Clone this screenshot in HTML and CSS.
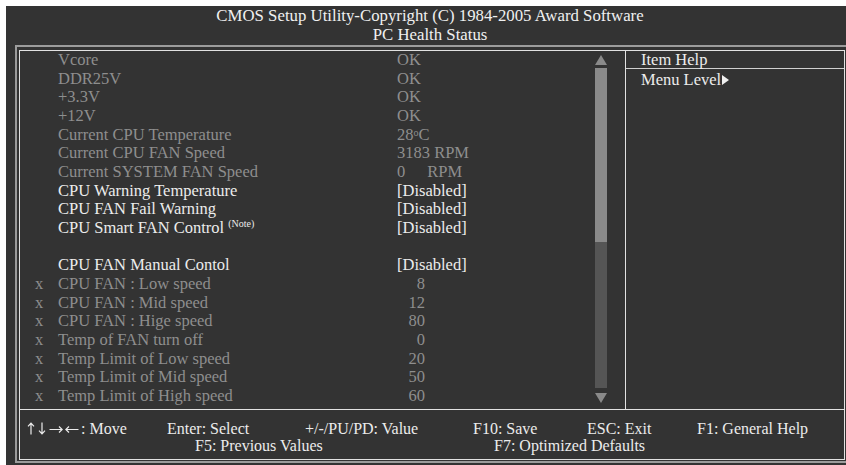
FILE: index.html
```html
<!DOCTYPE html>
<html>
<head>
<meta charset="utf-8">
<title>PC Health Status</title>
<link rel="stylesheet" href="styles.css">
</head>
<body>
<div class="screen">
  <header class="title">
    <div>CMOS Setup Utility-Copyright (C) 1984-2005 Award Software</div>
    <div>PC Health Status</div>
  </header>
  <div class="frame">
    <div class="inner">
      <div class="main">
        <div class="left">
          <div class="list">
            <div class="row dim"><span class="mk"></span><span class="lbl">Vcore</span><span class="val">OK</span></div>
            <div class="row dim"><span class="mk"></span><span class="lbl">DDR25V</span><span class="val">OK</span></div>
            <div class="row dim"><span class="mk"></span><span class="lbl">+3.3V</span><span class="val">OK</span></div>
            <div class="row dim"><span class="mk"></span><span class="lbl">+12V</span><span class="val">OK</span></div>
            <div class="row dim"><span class="mk"></span><span class="lbl">Current CPU Temperature</span><span class="val">28<span class="deg">o</span>C</span></div>
            <div class="row dim"><span class="mk"></span><span class="lbl">Current CPU FAN Speed</span><span class="val">3183 RPM</span></div>
            <div class="row dim"><span class="mk"></span><span class="lbl">Current SYSTEM FAN Speed</span><span class="val">0<span class="gap"></span>RPM</span></div>
            <div class="row"><span class="mk"></span><span class="lbl">CPU Warning Temperature</span><span class="val">[Disabled]</span></div>
            <div class="row"><span class="mk"></span><span class="lbl">CPU FAN Fail Warning</span><span class="val">[Disabled]</span></div>
            <div class="row"><span class="mk"></span><span class="lbl">CPU Smart FAN Control <sup class="note">(Note)</sup></span><span class="val">[Disabled]</span></div>
            <div class="row"><span class="mk"></span><span class="lbl"></span><span class="val"></span></div>
            <div class="row"><span class="mk"></span><span class="lbl">CPU FAN Manual Contol</span><span class="val">[Disabled]</span></div>
            <div class="row dim"><span class="mk">x</span><span class="lbl">CPU FAN : Low speed</span><span class="val"><span class="num">8</span></span></div>
            <div class="row dim"><span class="mk">x</span><span class="lbl">CPU FAN : Mid speed</span><span class="val"><span class="num">12</span></span></div>
            <div class="row dim"><span class="mk">x</span><span class="lbl">CPU FAN : Hige speed</span><span class="val"><span class="num">80</span></span></div>
            <div class="row dim"><span class="mk">x</span><span class="lbl">Temp of FAN turn off</span><span class="val"><span class="num">0</span></span></div>
            <div class="row dim"><span class="mk">x</span><span class="lbl">Temp Limit of Low speed</span><span class="val"><span class="num">20</span></span></div>
            <div class="row dim"><span class="mk">x</span><span class="lbl">Temp Limit of Mid speed</span><span class="val"><span class="num">50</span></span></div>
            <div class="row dim"><span class="mk">x</span><span class="lbl">Temp Limit of High speed</span><span class="val"><span class="num">60</span></span></div>
          </div>
          <div class="scroll">
            <div class="tri-up"></div>
            <div class="thumb"></div>
            <div class="track"></div>
            <div class="tri-down"></div>
          </div>
        </div>
        <div class="help">
          <div class="help-head">Item Help</div>
          <div class="help-body">Menu Level<span class="arrow"></span></div>
        </div>
      </div>
      <footer class="foot">
        <div class="frow r1">
          <span class="k1"><svg class="ar-v" width="8" height="13" viewBox="0 0 8 13"><path d="M4 12.5V1.2M1 4.4L4 1.2L7 4.4"/></svg><svg class="ar-v" width="8" height="13" viewBox="0 0 8 13"><path d="M4 0.5V11.8M1 8.6L4 11.8L7 8.6"/></svg><svg class="ar-h" width="14" height="13" viewBox="0 0 14 13"><path d="M0.5 7.5H13.2M10 4.5L13.2 7.5L10 10.5"/></svg><svg class="ar-h" width="14" height="13" viewBox="0 0 14 13"><path d="M13.5 7.5H0.8M4 4.5L0.8 7.5L4 10.5"/></svg>: Move</span>
          <span class="k2">Enter: Select</span>
          <span class="k3">+/-/PU/PD: Value</span>
          <span class="k4">F10: Save</span>
          <span class="k5">ESC: Exit</span>
          <span class="k6">F1: General Help</span>
        </div>
        <div class="frow r2">
          <span class="k7">F5: Previous Values</span>
          <span class="k8">F7: Optimized Defaults</span>
        </div>
      </footer>
    </div>
  </div>
</div>
</body>
</html>
```
FILE: styles.css
```css
html, body {
  margin: 0;
  padding: 0;
  background: #ffffff;
}
body {
  font-family: "Liberation Serif", "Times New Roman", serif;
  font-size: 16px;
  color: #ececec;
}
.screen {
  margin: 6px 0 0 6px;
  width: 840px;
  height: 459px;
  background: #333333;
  overflow: hidden;
}
.title {
  height: 39px;
  line-height: 19px;
  font-size: 16.8px;
  text-align: center;
  padding-left: 8px;
  color: #f0f0f0;
}
.frame {
  margin-left: 9px;
  width: 826px;
  border: 2px solid #9c9c9c;
  padding: 3px 1px 1px 2px;
}
.inner {
  border: 1px solid #e2e2e2;
  height: 408px;
  display: flex;
  flex-direction: column;
}
.main {
  height: 358px;
  display: flex;
  border-bottom: 1px solid #e2e2e2;
}
.left {
  width: 605px;
  display: flex;
  border-right: 1px solid #e2e2e2;
}
.list {
  flex: 1;
  font-size: 16.5px;
}
.row {
  display: flex;
  height: 18.67px;
  line-height: 18.67px;
  white-space: nowrap;
}
.row.dim {
  color: #8e8e8e;
}
.mk {
  width: 23px;
  padding-left: 15px;
}
.lbl {
  width: 339px;
}
.val {
  flex: 1;
}
.num {
  display: inline-block;
  width: 28px;
  text-align: right;
}
.gap {
  display: inline-block;
  width: 22px;
}
.deg {
  font-size: 10px;
  vertical-align: 4px;
  line-height: 0;
}
.note {
  font-size: 10px;
  vertical-align: 6px;
  line-height: 0;
}
.scroll {
  width: 12px;
  margin-right: 18px;
  padding-top: 4px;
  display: flex;
  flex-direction: column;
}
.tri-up {
  width: 0;
  height: 0;
  border-left: 6px solid transparent;
  border-right: 6px solid transparent;
  border-bottom: 10px solid #8a8a8a;
}
.thumb {
  margin-top: 3px;
  height: 174px;
  background: #8a8a8a;
}
.track {
  height: 146px;
  background: #555555;
}
.tri-down {
  margin-top: 5px;
  width: 0;
  height: 0;
  border-left: 6px solid transparent;
  border-right: 6px solid transparent;
  border-top: 10px solid #8a8a8a;
}
.help {
  flex: 1;
  font-size: 16.5px;
}
.help-head {
  height: 17px;
  line-height: 17px;
  padding-left: 15px;
  border-bottom: 1px solid #cfcfcf;
}
.help-body {
  padding-left: 15px;
  padding-top: 2px;
  line-height: 18px;
}
.arrow {
  display: inline-block;
  width: 0;
  height: 0;
  border-top: 5px solid transparent;
  border-bottom: 5px solid transparent;
  border-left: 7px solid #f0f0f0;
  margin-left: 1px;
}
.foot {
  padding-top: 10px;
}
.frow {
  display: flex;
  line-height: 17px;
  white-space: nowrap;
}
.k1 svg {
  vertical-align: -1px;
  fill: none;
  stroke: #ececec;
  stroke-width: 1.2;
}
.ar-v {
  margin-right: 3px;
}
.ar-h {
  margin-right: 2px;
}
.r1 {
  padding-left: 7px;
}
.k1 { width: 140px; }
.k2 { width: 138px; }
.k3 { width: 168px; }
.k4 { width: 114px; }
.k5 { width: 110px; }
.r2 {
  padding-left: 175px;
}
.k7 { width: 299px; }
```
